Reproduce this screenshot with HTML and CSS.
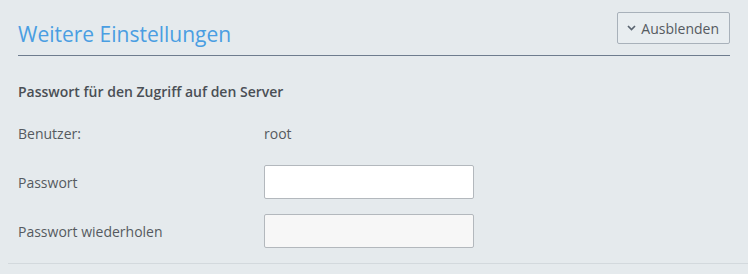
FILE: index.html
```html
<!DOCTYPE html>
<html lang="de">
<head>
    <meta charset="UTF-8">
    <title>Weitere Einstellungen</title>
    <link rel="stylesheet" href="styles.css">
</head>
<body>
    <div class="section">
        <div class="section-head">
            <h2>Weitere Einstellungen</h2>
            <button class="toggle-btn" type="button">
                <svg width="9" height="6" viewBox="0 0 9 6"><path d="M1 1l3.5 3.5L8 1" fill="none" stroke="#5a6470" stroke-width="1.7"/></svg>
                Ausblenden
            </button>
        </div>

        <div class="section-body">
            <h3>Passwort für den Zugriff auf den Server</h3>

            <div class="fields">
                <div class="row">
                    <span class="label">Benutzer:</span>
                    <span class="value">root</span>
                </div>
                <div class="row">
                    <label class="label" for="pw">Passwort</label>
                    <input type="password" id="pw">
                </div>
                <div class="row">
                    <label class="label" for="pw2">Passwort wiederholen</label>
                    <input type="password" id="pw2" class="muted">
                </div>
            </div>
        </div>
    </div>
</body>
</html>
```

FILE: styles.css
```css
body {
    margin: 0;
    background-color: #e5eaed;
    font-family: "Open Sans", Arial, sans-serif;
    font-size: 14px;
    color: #555a60;
}
.section {
    margin-left: 8px;
    height: 263px;
    border-bottom: 1px solid #d3d9dd;
}
.section-head {
    display: flex;
    justify-content: space-between;
    align-items: flex-end;
    margin: 0 18px 0 10px;
    padding-bottom: 7px;
    border-bottom: 1px solid #6e7c8e;
    height: 48px;
}
.section-head h2 {
    margin: 0;
    font-size: 21px;
    font-weight: 400;
    color: #4a9ee2;
}
.toggle-btn {
    align-self: flex-start;
    margin-top: 12px;
    height: 32px;
    padding: 0 10px 0 9px;
    background: #e8edf0;
    border: 1px solid #a8b1ba;
    border-radius: 2px;
    font-family: inherit;
    font-size: 14px;
    color: #555a60;
    display: flex;
    align-items: center;
    gap: 5px;
}
.section-body {
    padding: 0 10px;
}
.section-body h3 {
    margin: 26px 0 0;
    font-size: 14px;
    font-weight: 600;
    color: #4a4f55;
    line-height: 19px;
}
.fields {
    display: flex;
    flex-direction: column;
    gap: 15px;
    margin-top: 15px;
}
.row {
    display: flex;
    align-items: center;
    height: 34px;
}
.label {
    width: 246px;
}
.row input {
    width: 210px;
    height: 34px;
    box-sizing: border-box;
    border: 1px solid #b3b8bd;
    border-radius: 2px;
    background: #fff;
    margin: 0;
}
.row input.muted {
    background: #f7f7f7;
}
```
